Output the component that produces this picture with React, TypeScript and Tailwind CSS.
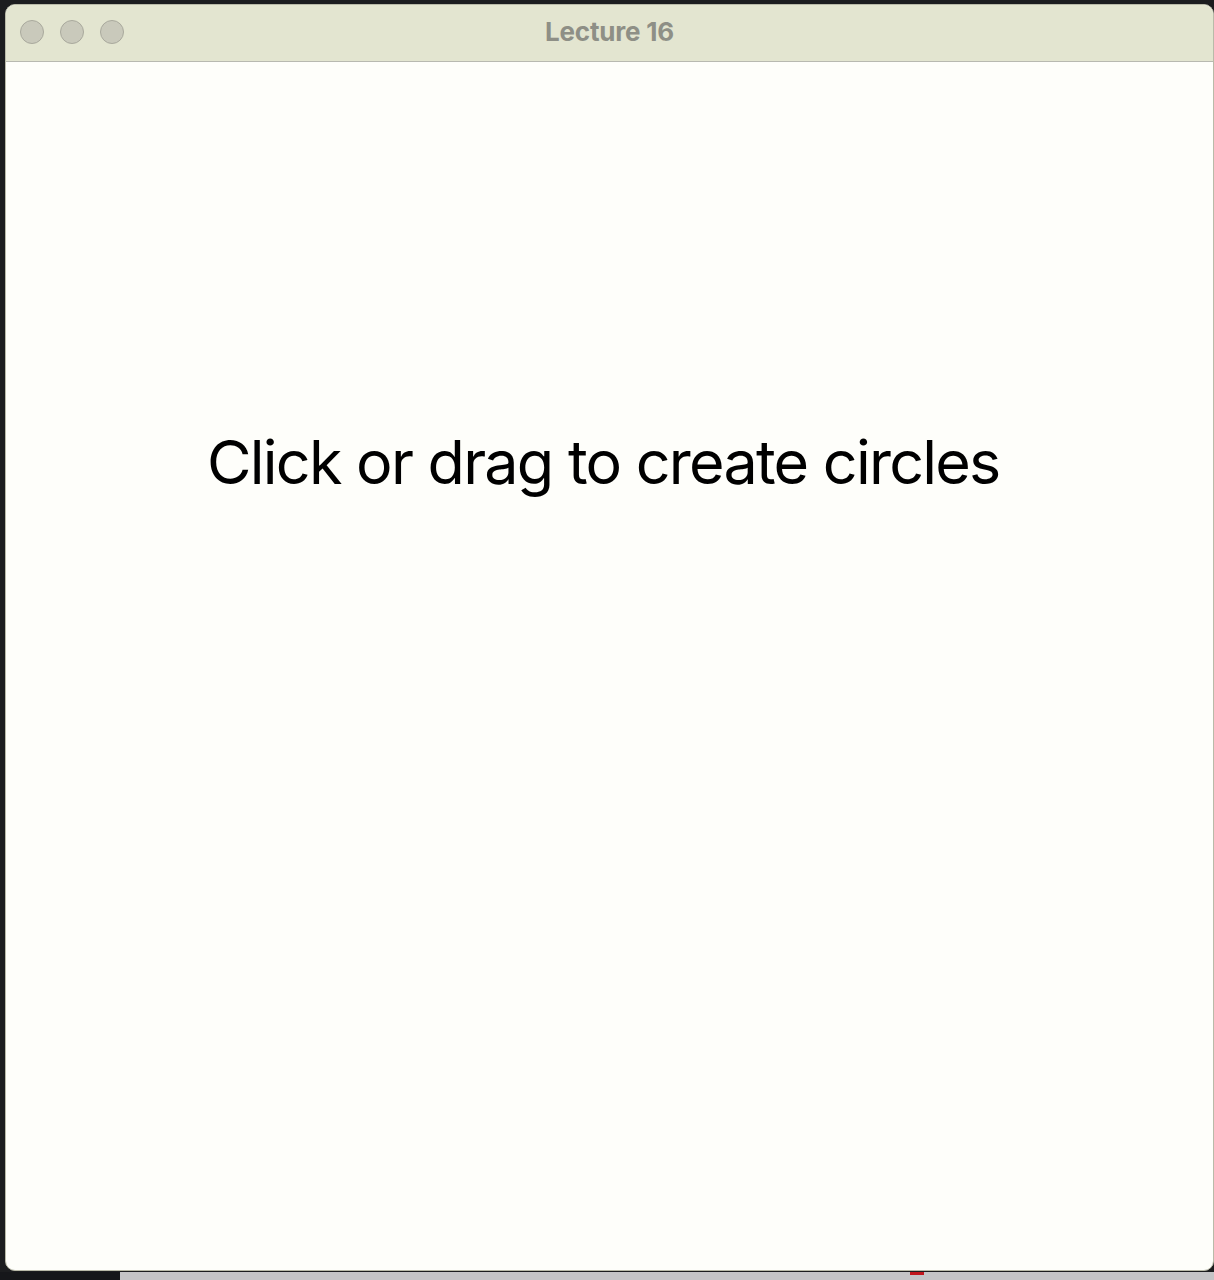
export default function App() {
  return (
    <div className="w-[1214px] h-[1280px] bg-[#1c1d1f] overflow-hidden flex flex-col">
      <div className="flex-1 flex pt-[4px] pl-[5px] pb-[1px]">
        <div className="flex-1 flex flex-col rounded-[10px] overflow-hidden bg-[#fefefa] border border-[#b9baa8]">
          {/* Title bar */}
          <div className="h-[57px] shrink-0 relative flex items-center pb-[2px] bg-[#e3e5d0] border-b border-[#b8b9b0]">
            <div className="flex items-center gap-[16px] pl-[14px]">
              <span className="w-[24px] h-[24px] rounded-full bg-[#c9c9bb] border border-[#a9a99d]" />
              <span className="w-[24px] h-[24px] rounded-full bg-[#c9c9bb] border border-[#a9a99d]" />
              <span className="w-[24px] h-[24px] rounded-full bg-[#c9c9bb] border border-[#a9a99d]" />
            </div>
            <div className="absolute inset-0 flex items-center justify-center pb-[3px]">
              <span className="font-['Inter',sans-serif] font-bold text-[26px] text-[#8e8f86] tracking-[-0.2px]">
                Lecture 16
              </span>
            </div>
          </div>
          {/* Canvas */}
          <div className="flex-1 flex flex-col items-start pl-[201px] pt-[360px]">
            <p className="font-['Inter',sans-serif] text-[61px] leading-[80px] text-black tracking-[-1.75px]">
              Click or drag to create circles
            </p>
          </div>
        </div>
      </div>
      <div className="h-[8px] shrink-0 flex">
        <div className="w-[120px] bg-[#16171a]" />
        <div className="flex-1 bg-[#c4c4c6] relative">
          <span className="absolute left-[790px] top-[0px] w-[14px] h-[3px] bg-[#c0161c]" />
        </div>
      </div>
    </div>
  );
}
